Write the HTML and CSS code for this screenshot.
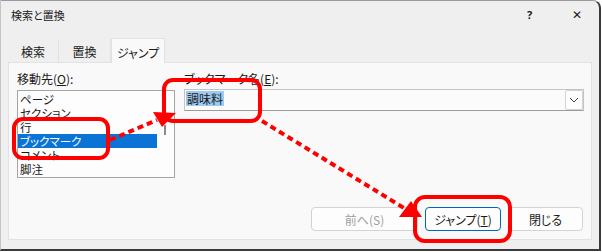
FILE: index.html
```html
<!DOCTYPE html>
<html lang="ja">
<head>
    <meta charset="UTF-8">
    <title>検索と置換</title>
    <link rel="stylesheet" href="styles.css">
</head>
<body>
    <div class="screen">
        <div class="window">
            <div class="titlebar">
                <span class="title">検索と置換</span>
                <span class="help">?</span>
                <span class="close">✕</span>
            </div>
            <div class="tabs">
                <div class="tab">検索</div>
                <div class="tab">置換</div>
                <div class="tab active">ジャンプ</div>
            </div>
            <div class="panel">
                <div class="fields">
                    <div class="col-left">
                        <div class="label">移動先(<u>O</u>):</div>
                        <div class="listbox">
                            <div class="items">
                                <div class="item">ページ</div>
                                <div class="item">セクション</div>
                                <div class="item">行</div>
                                <div class="item selected">ブックマーク</div>
                                <div class="item">コメント</div>
                                <div class="item">脚注</div>
                            </div>
                            <div class="scrollbar"><div class="thumb"></div></div>
                        </div>
                    </div>
                    <div class="col-right">
                        <div class="label">ブックマーク名(<u>E</u>):</div>
                        <div class="combo">
                            <div class="combo-text"><span class="sel">調味料</span></div>
                            <div class="combo-btn">
                                <svg width="10" height="6" viewBox="0 0 10 6">
                                    <path d="M1 1 L5 5 L9 1" fill="none" stroke="#444" stroke-width="1"/>
                                </svg>
                            </div>
                        </div>
                    </div>
                </div>
                <div class="buttons">
                    <button class="btn prev" disabled>前へ(S)</button>
                    <button class="btn default">ジャンプ(<u>T</u>)</button>
                    <button class="btn close-btn">閉じる</button>
                </div>
            </div>
        </div>

        <!-- annotations drawn over the dialog -->
        <svg class="marks" width="602" height="252" viewBox="0 0 602 252">
            <g fill="none" stroke="#ff0000" stroke-width="4">
                <rect x="14" y="119" width="94" height="39" rx="9"/>
                <rect x="164" y="80" width="96" height="41" rx="9"/>
                <rect x="415" y="197" width="95" height="44" rx="10"/>
                <line x1="110" y1="140" x2="157" y2="120" stroke-dasharray="6 4"/>
                <line x1="262" y1="121" x2="404" y2="208" stroke-dasharray="6 4"/>
            </g>
            <g fill="#ff0000">
                <polygon points="153,112 176,113 162,127"/>
                <polygon points="411,201 422,217 399,217"/>
            </g>
        </svg>
    </div>
</body>
</html>
```

FILE: styles.css
```css
body {
    margin: 0;
    background: #fff;
    font-family: "Noto Sans CJK JP", "Noto Sans", sans-serif;
    font-size: 12px;
    font-feature-settings: "palt";
    color: #1a1a1a;
}

.screen {
    position: relative;
    width: 602px;
    height: 252px;
}

.window {
    box-sizing: border-box;
    width: 601px;
    height: 251px;
    background: #efefef;
    border-top: 1px solid #9a9a9a;
    border-left: 1px solid #c4c4c4;
    border-right: 2px solid #3a3a3a;
    border-bottom: 2px solid #3a3a3a;
    border-top-right-radius: 8px;
    display: flex;
    flex-direction: column;
}

.titlebar {
    height: 37px;
    box-sizing: border-box;
    padding-top: 6px;
    display: flex;
    align-items: flex-start;
    line-height: 16px;
}

.title {
    padding-left: 10px;
    font-size: 11px;
    flex: 1;
}

.help {
    width: 12px;
    font-family: "Noto Sans", sans-serif;
    font-weight: bold;
    font-size: 11px;
    margin-right: 33px;
}

.close {
    font-family: "DejaVu Sans", sans-serif;
    font-size: 12px;
    margin-right: 17px;
}

.tabs {
    display: flex;
    align-items: flex-end;
    padding-left: 7px;
    height: 24px;
    position: relative;
    z-index: 1;
}

.tab {
    box-sizing: border-box;
    height: 23px;
    padding-top: 5px;
    line-height: 16px;
    text-align: center;
    border-right: 1px solid #e2e2e2;
}

.tab:nth-child(1) { width: 51px; }
.tab:nth-child(2) { width: 52px; }

.tab.active {
    width: 54px;
    height: 25px;
    margin-bottom: -1px;
    padding-top: 6px;
    background: #f9f9f9;
    border: 1px solid #e2e2e2;
    border-bottom: none;
}

.panel {
    margin: 0 7px 0 7px;
    height: 178px;
    box-sizing: border-box;
    background: #f9f9f9;
    border: 1px solid #e2e2e2;
    padding: 8px 7px 8px 8px;
    display: flex;
    flex-direction: column;
}

.fields {
    display: flex;
    gap: 9px;
}

.label {
    line-height: 16px;
    height: 16px;
    white-space: nowrap;
}

.col-left {
    width: 158px;
}

.listbox {
    margin-top: 3px;
    box-sizing: border-box;
    height: 88px;
    border: 1px solid #a4a4a4;
    background: #fdfdfd;
    padding: 1px 0;
    display: flex;
}

.items {
    width: 139px;
}

.item {
    height: 14px;
    line-height: 14px;
    padding-left: 2px;
    font-size: 11.5px;
}

.item.selected {
    background: #0a74d6;
    color: #fff;
}

.scrollbar {
    flex: 1;
    position: relative;
}

.thumb {
    position: absolute;
    left: 7px;
    top: 33px;
    width: 2px;
    height: 10px;
    background: #8a8a8a;
}

.col-right {
    flex: 1;
}

.combo {
    margin-top: 2px;
    box-sizing: border-box;
    height: 22px;
    border: 1px solid #c4c4c4;
    border-bottom-color: #9c9c9c;
    background: #fbfbfb;
    display: flex;
}

.combo-text {
    flex: 1;
    padding: 1px 0 0 1px;
    line-height: 15px;
}

.sel {
    background: #9ccaf0;
    display: inline-block;
    padding: 0 1px;
}

.combo-btn {
    width: 16px;
    border: 1px solid #d2d2d2;
    border-radius: 2px;
    background: #fdfdfd;
    display: flex;
    align-items: center;
    justify-content: center;
}

.buttons {
    margin-top: auto;
    display: flex;
    justify-content: flex-end;
    gap: 7px;
    padding-right: 1px;
}

.btn {
    height: 24px;
    box-sizing: border-box;
    font-family: inherit;
    font-size: 12px;
    font-feature-settings: "palt";
    background: #fdfdfd;
    border: 1px solid #d3d3d3;
    border-radius: 4px;
    color: #1a1a1a;
    padding: 0;
}

.btn.prev {
    width: 107px;
    color: #9e9e9e;
}

.btn.default {
    width: 76px;
    border: 1px solid #0067c0;
}

.btn.close-btn {
    width: 75px;
}

.marks {
    position: absolute;
    top: 0;
    left: 0;
    pointer-events: none;
}
```
